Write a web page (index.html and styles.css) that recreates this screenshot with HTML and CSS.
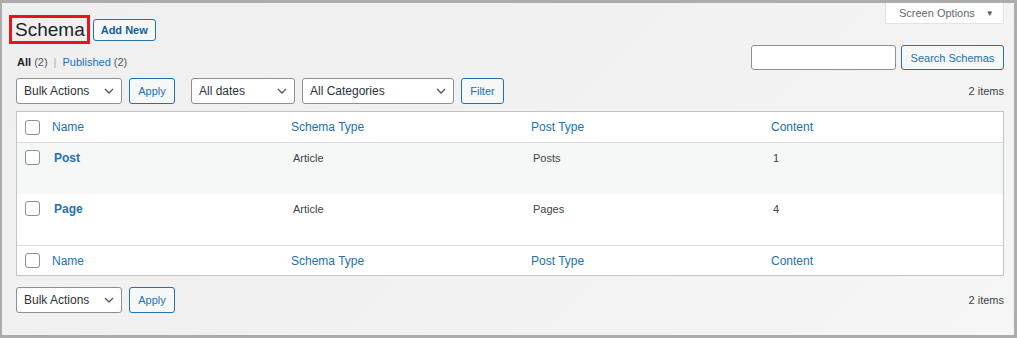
FILE: index.html
```html
<!DOCTYPE html>
<html lang="en">
<head>
<meta charset="utf-8">
<title>Schema</title>
<link rel="stylesheet" href="styles.css">
</head>
<body>
<div class="frame">
  <div class="screen-options">Screen Options <span class="so-arrow">▼</span></div>
  <div class="wrap">
    <div class="title-row">
      <h1 class="title">Schema</h1>
      <a class="btn-add" href="#">Add New</a>
    </div>

    <div class="filters-row">
      <ul class="subsubsub">
        <li><span class="current">All</span> <span class="count">(2)</span></li>
        <li class="sep">|</li>
        <li><a href="#">Published</a> <span class="count">(2)</span></li>
      </ul>
      <div class="search-box">
        <input class="search-input" type="search" aria-label="Search Schemas">
        <button class="btn">Search Schemas</button>
      </div>
    </div>

    <div class="tablenav">
      <div class="actions">
        <div class="select w-bulk"><span>Bulk Actions</span><svg class="chev" width="10" height="6" viewBox="0 0 10 6"><path d="M1 1l4 4 4-4" fill="none" stroke="#50575e" stroke-width="1.3"/></svg></div>
        <button class="btn btn-apply">Apply</button>
      </div>
      <div class="actions">
        <div class="select w-dates"><span>All dates</span><svg class="chev" width="10" height="6" viewBox="0 0 10 6"><path d="M1 1l4 4 4-4" fill="none" stroke="#50575e" stroke-width="1.3"/></svg></div>
        <div class="select w-cats"><span>All Categories</span><svg class="chev" width="10" height="6" viewBox="0 0 10 6"><path d="M1 1l4 4 4-4" fill="none" stroke="#50575e" stroke-width="1.3"/></svg></div>
        <button class="btn btn-filter">Filter</button>
      </div>
      <div class="items">2 items</div>
    </div>

    <div class="table">
      <div class="row head">
        <div class="cell cb"><span class="checkbox"></span></div>
        <div class="cell col"><a href="#">Name</a></div>
        <div class="cell col"><a href="#">Schema Type</a></div>
        <div class="cell col"><a href="#">Post Type</a></div>
        <div class="cell col"><a href="#">Content</a></div>
      </div>
      <div class="row data alt">
        <div class="cell cb"><span class="checkbox"></span></div>
        <div class="cell name"><a href="#">Post</a></div>
        <div class="cell">Article</div>
        <div class="cell">Posts</div>
        <div class="cell">1</div>
      </div>
      <div class="row data">
        <div class="cell cb"><span class="checkbox"></span></div>
        <div class="cell name"><a href="#">Page</a></div>
        <div class="cell">Article</div>
        <div class="cell">Pages</div>
        <div class="cell">4</div>
      </div>
      <div class="row head foot">
        <div class="cell cb"><span class="checkbox"></span></div>
        <div class="cell col"><a href="#">Name</a></div>
        <div class="cell col"><a href="#">Schema Type</a></div>
        <div class="cell col"><a href="#">Post Type</a></div>
        <div class="cell col"><a href="#">Content</a></div>
      </div>
    </div>

    <div class="tablenav bottom">
      <div class="actions">
        <div class="select w-bulk"><span>Bulk Actions</span><svg class="chev" width="10" height="6" viewBox="0 0 10 6"><path d="M1 1l4 4 4-4" fill="none" stroke="#50575e" stroke-width="1.3"/></svg></div>
        <button class="btn btn-apply">Apply</button>
      </div>
      <div class="items">2 items</div>
    </div>
  </div>
</div>
</body>
</html>
```

FILE: styles.css
```css
* { box-sizing: border-box; }

html, body {
  margin: 0;
  padding: 0;
}

body {
  background: #acacac;
  font-family: "Liberation Sans", Arial, sans-serif;
  font-size: 12px;
  color: #3c434a;
  padding: 3px 3px 3px 2px;
  height: 338px;
  overflow: hidden;
}

a { color: #2271b1; text-decoration: none; }

.frame {
  position: relative;
  height: 332px;
  background: linear-gradient(135deg, #efeff0 0%, #f2f2f3 60%, #f6f6f6 100%);
}

.screen-options {
  position: absolute;
  top: 0;
  right: 10px;
  width: 119px;
  height: 21px;
  background: #fff;
  border: 1px solid #e2e3e4;
  border-top: none;
  display: flex;
  align-items: center;
  padding-left: 13px;
  font-size: 11px;
  color: #646970;
}

.so-arrow {
  font-size: 8px;
  margin-left: 11px;
  color: #50575e;
}

.wrap {
  padding: 12px 10px 0 14px;
}

.title-row {
  display: flex;
  align-items: center;
  gap: 3px;
  margin-left: -7px;
}

.title {
  margin: 0;
  font-weight: 400;
  font-size: 19px;
  line-height: 23px;
  color: #1d2327;
  border: 3px solid #e8141c;
  padding: 0 2px 0 3px;
}

.btn-add {
  display: inline-flex;
  align-items: center;
  height: 22px;
  padding: 0 7px;
  border: 1px solid #2271b1;
  border-radius: 3px;
  background: #f6f7f7;
  font-size: 11px;
  font-weight: 700;
  color: #135e96;
}

.filters-row {
  display: flex;
  justify-content: space-between;
  align-items: flex-end;
  margin-top: 1px;
}

.subsubsub {
  list-style: none;
  margin: 0 0 1px 1px;
  padding: 0;
  display: flex;
  gap: 6px;
  font-size: 11px;
  line-height: 14px;
  color: #50575e;
}

.subsubsub .current { color: #1d2327; font-weight: 700; }
.subsubsub .sep { color: #a7aaad; }

.search-box {
  display: flex;
  gap: 5px;
}

.search-input {
  width: 145px;
  height: 25px;
  border: 1px solid #8c8f94;
  border-radius: 3px;
  background: #fff;
  margin: 0;
}

.btn {
  height: 25px;
  margin: 0;
  padding: 0 9px;
  border: 1px solid #2271b1;
  border-radius: 3px;
  background: #f6f7f7;
  color: #2271b1;
  font-family: inherit;
  font-size: 11px;
}

.search-box .btn { width: 103px; padding: 0; }

.tablenav {
  display: flex;
  align-items: center;
  gap: 16px;
  height: 26px;
  margin-top: 8px;
}

.tablenav.bottom { margin-top: 11px; }

.actions {
  display: flex;
  gap: 7px;
  align-items: center;
}

.select {
  height: 26px;
  display: flex;
  align-items: center;
  justify-content: space-between;
  padding: 0 7px 0 7px;
  border: 1px solid #8c8f94;
  border-radius: 3px;
  background: #fff;
  color: #2c3338;
  font-size: 12px;
}

.w-bulk { width: 106px; }
.w-dates { width: 104px; }
.w-cats { width: 152px; }

.btn-apply { width: 46px; height: 26px; padding: 0; }
.btn-filter { width: 43px; height: 26px; padding: 0; }

.items {
  margin-left: auto;
  font-size: 11px;
  color: #3c434a;
}

.table {
  margin-top: 7px;
  background: #fff;
  border: 1px solid #c3c4c7;
}

.row {
  display: grid;
  grid-template-columns: 35px 239px 240px 240px 1fr;
}

.row.head {
  height: 31px;
  align-items: center;
  border-bottom: 1px solid #dcdcde;
}

.row.foot {
  border-bottom: none;
  border-top: 1px solid #dcdcde;
  height: 30px;
}

.row.data {
  height: 51px;
  align-items: start;
  padding-top: 6px;
}

.row.alt { background: #f6f7f7; }

.cell {
  line-height: 18px;
  font-size: 11px;
  color: #3c434a;
}

.row.data .cell { padding-left: 2px; }
.row.data .cell.cb { padding-left: 8px; padding-top: 1px; }

.cell.cb { padding-left: 8px; display: flex; align-items: center; }

.row.head .cell.col { font-size: 12px; }

.cell.name a { font-weight: 700; font-size: 12px; color: #2271b1; }

.checkbox {
  display: block;
  width: 15px;
  height: 15px;
  border: 1px solid #8c8f94;
  border-radius: 3px;
  background: #fff;
}
```
